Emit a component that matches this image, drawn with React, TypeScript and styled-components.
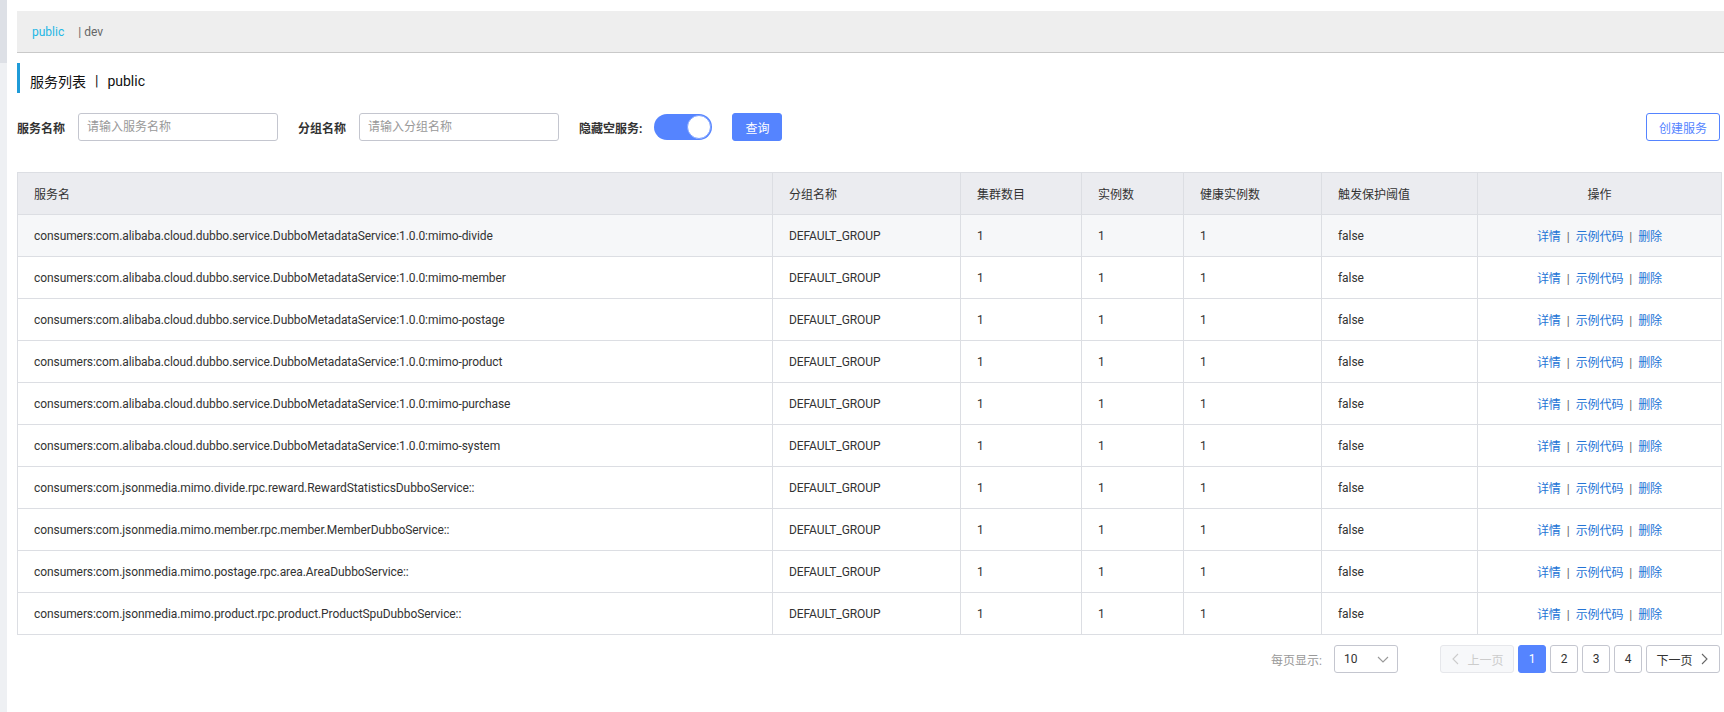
import React from 'react';
import styled, { createGlobalStyle } from 'styled-components';

const GlobalStyle = createGlobalStyle`
	html, body {
		margin: 0;
		padding: 0;
		background: #fff;
	}
	body {
		font-family: Roboto, "Noto Sans CJK SC", sans-serif;
		font-size: 12px;
		color: #333;
	}
`;

const SPage = styled.div`
	display: flex;
	width: 1724px;
	height: 712px;
	overflow: hidden;
`;

const SRail = styled.div`
	width: 7px;
	flex: none;
	background: #eef0f3;
	display: flex;
	flex-direction: column;
`;

const SRailThumb = styled.div`
	height: 63px;
	background: #dde0e6;
`;

const SMain = styled.div`
	flex: 1;
	min-width: 0;
	padding: 11px 4px 0 10px;
	display: flex;
	flex-direction: column;
`;

const STabBar = styled.div`
	height: 41px;
	margin-right: -4px;
	background: #eeeeee;
	border-bottom: 1px solid #c9c9c9;
	display: flex;
	align-items: center;
	padding-left: 15px;
	gap: 14px;
`;

const STab = styled.span<{ $active?: boolean }>`
	font-size: 12px;
	padding-top: 1px;
	color: ${({ $active }) => ($active ? '#23b7e5' : '#666')};
`;

const STitle = styled.div`
	box-sizing: border-box;
	margin-top: 10px;
	height: 30px;
	border-left: 3px solid #1f9bd8;
	padding: 5px 0 0 10px;
	display: flex;
	align-items: center;
	font-size: 14px;
	color: #111;
	gap: 9px;
`;

const SForm = styled.div`
	margin-top: 20px;
	display: flex;
	align-items: center;
	height: 28px;
`;

const SField = styled.div`
	display: flex;
	align-items: center;
	margin-right: 20px;
`;

const SLabel = styled.span`
	font-size: 12px;
	font-weight: 700;
	color: #333;
	margin-right: 13px;
`;

const SInput = styled.input`
	box-sizing: border-box;
	width: 200px;
	height: 28px;
	border: 1px solid #c4c6cf;
	border-radius: 3px;
	padding: 0 8px;
	font-family: inherit;
	font-size: 12px;
	color: #333;
	outline: none;
	&::placeholder {
		color: #999;
	}
`;

const SSwitch = styled.div<{ $on: boolean }>`
	box-sizing: border-box;
	width: 58px;
	height: 26px;
	border-radius: 13px;
	background: ${({ $on }) => ($on ? '#5584ff' : '#e6e7eb')};
	display: flex;
	align-items: center;
	justify-content: ${({ $on }) => ($on ? 'flex-end' : 'flex-start')};
	padding: 1px;
	margin-left: -1px;
`;

const SKnob = styled.div`
	box-sizing: border-box;
	width: 24px;
	height: 24px;
	border-radius: 50%;
	background: #fff;
	border: 1px solid #7ea2ff;
`;

const SButton = styled.button<{ $primary?: boolean }>`
	box-sizing: border-box;
	height: 28px;
	padding: 0 12px;
	border-radius: 3px;
	font-family: inherit;
	font-size: 12px;
	cursor: pointer;
	border: 1px solid #5584ff;
	background: ${({ $primary }) => ($primary ? '#5584ff' : '#fff')};
	color: ${({ $primary }) => ($primary ? '#fff' : '#5584ff')};
`;

const SSpacer = styled.div`
	flex: 1;
`;

const STable = styled.table`
	margin-top: 31px;
	width: 1704px;
	border-collapse: collapse;
	table-layout: fixed;
	font-size: 12px;
`;

const STh = styled.th<{ $center?: boolean }>`
	height: 41px;
	padding: 0 16px;
	background: #ebecf0;
	border: 1px solid #dcdee3;
	font-weight: 400;
	color: #333;
	text-align: ${({ $center }) => ($center ? 'center' : 'left')};
`;

const STr = styled.tr<{ $hover?: boolean }>`
	background: ${({ $hover }) => ($hover ? '#f6f7f9' : '#fff')};
`;

const STd = styled.td<{ $center?: boolean }>`
	height: 41px;
	padding: 0 16px;
	border: 1px solid #dcdee3;
	color: #333;
	white-space: nowrap;
	overflow: hidden;
	letter-spacing: -0.08px;
	text-align: ${({ $center }) => ($center ? 'center' : 'left')};
`;

const SLink = styled.a`
	color: #2474d6;
	text-decoration: none;
	cursor: pointer;
`;

const SSep = styled.span`
	color: #666;
	margin: 0 6px;
`;

const SPager = styled.div`
	margin-top: 10px;
	display: flex;
	justify-content: flex-end;
	align-items: center;
	height: 28px;
`;

const SPagerLabel = styled.span`
	color: #999;
	margin-right: 12px;
`;

const SSelect = styled.div`
	box-sizing: border-box;
	width: 64px;
	height: 28px;
	border: 1px solid #c4c6cf;
	border-radius: 3px;
	display: flex;
	align-items: center;
	justify-content: space-between;
	padding: 0 8px 0 9px;
	margin-right: 38px;
	color: #333;
`;

const SPageBtn = styled.div<{ $active?: boolean; $disabled?: boolean; $wide?: boolean }>`
	box-sizing: border-box;
	height: 28px;
	min-width: 28px;
	width: ${({ $wide }) => ($wide ? '74px' : '28px')};
	margin-left: 4px;
	border-radius: 3px;
	display: flex;
	align-items: center;
	justify-content: center;
	gap: 5px;
	border: 1px solid ${({ $active, $disabled }) => ($active ? '#5584ff' : $disabled ? '#e6e7eb' : '#c4c6cf')};
	background: ${({ $active, $disabled }) => ($active ? '#5584ff' : $disabled ? '#f7f8fa' : '#fff')};
	color: ${({ $active, $disabled }) => ($active ? '#fff' : $disabled ? '#ccc' : '#333')};
	cursor: ${({ $disabled }) => ($disabled ? 'not-allowed' : 'pointer')};
`;

const Chevron = ({ dir, color }: { dir: 'left' | 'right' | 'down'; color: string }) => {
	const d = dir === 'left' ? 'M8 1 L3 6 L8 11' : dir === 'right' ? 'M4 1 L9 6 L4 11' : 'M1 4 L6 9 L11 4';
	return (
		<svg width="12" height="12" viewBox="0 0 12 12" fill="none">
			<path d={d} stroke={color} strokeWidth="1.1" />
		</svg>
	);
};

const services = [
	'consumers:com.alibaba.cloud.dubbo.service.DubboMetadataService:1.0.0:mimo-divide',
	'consumers:com.alibaba.cloud.dubbo.service.DubboMetadataService:1.0.0:mimo-member',
	'consumers:com.alibaba.cloud.dubbo.service.DubboMetadataService:1.0.0:mimo-postage',
	'consumers:com.alibaba.cloud.dubbo.service.DubboMetadataService:1.0.0:mimo-product',
	'consumers:com.alibaba.cloud.dubbo.service.DubboMetadataService:1.0.0:mimo-purchase',
	'consumers:com.alibaba.cloud.dubbo.service.DubboMetadataService:1.0.0:mimo-system',
	'consumers:com.jsonmedia.mimo.divide.rpc.reward.RewardStatisticsDubboService::',
	'consumers:com.jsonmedia.mimo.member.rpc.member.MemberDubboService::',
	'consumers:com.jsonmedia.mimo.postage.rpc.area.AreaDubboService::',
	'consumers:com.jsonmedia.mimo.product.rpc.product.ProductSpuDubboService::',
];

const columns = [
	{ title: '服务名', width: 755 },
	{ title: '分组名称', width: 188 },
	{ title: '集群数目', width: 121 },
	{ title: '实例数', width: 102 },
	{ title: '健康实例数', width: 138 },
	{ title: '触发保护阈值', width: 156 },
	{ title: '操作', width: 244, center: true },
];

export default function App() {
	return (
		<>
			<GlobalStyle />
			<SPage>
				<SRail>
					<SRailThumb />
				</SRail>
				<SMain>
					<STabBar>
						<STab $active>public</STab>
						<STab>| dev</STab>
					</STabBar>
					<STitle>
						<span>服务列表</span>
						<span>|</span>
						<span>public</span>
					</STitle>
					<SForm>
						<SField>
							<SLabel>服务名称</SLabel>
							<SInput placeholder="请输入服务名称" />
						</SField>
						<SField>
							<SLabel>分组名称</SLabel>
							<SInput placeholder="请输入分组名称" />
						</SField>
						<SField>
							<SLabel>隐藏空服务:</SLabel>
							<SSwitch $on>
								<SKnob />
							</SSwitch>
						</SField>
						<SButton $primary>查询</SButton>
						<SSpacer />
						<SButton>创建服务</SButton>
					</SForm>
					<STable>
						<colgroup>
							{columns.map((c) => (
								<col key={c.title} style={{ width: c.width }} />
							))}
						</colgroup>
						<thead>
							<tr>
								{columns.map((c) => (
									<STh key={c.title} $center={c.center}>
										{c.title}
									</STh>
								))}
							</tr>
						</thead>
						<tbody>
							{services.map((name, i) => (
								<STr key={name} $hover={i === 0}>
									<STd>{name}</STd>
									<STd>DEFAULT_GROUP</STd>
									<STd>1</STd>
									<STd>1</STd>
									<STd>1</STd>
									<STd>false</STd>
									<STd $center>
										<SLink>详情</SLink>
										<SSep>|</SSep>
										<SLink>示例代码</SLink>
										<SSep>|</SSep>
										<SLink>删除</SLink>
									</STd>
								</STr>
							))}
						</tbody>
					</STable>
					<SPager>
						<SPagerLabel>每页显示:</SPagerLabel>
						<SSelect>
							<span>10</span>
							<Chevron dir="down" color="#999" />
						</SSelect>
						<SPageBtn $disabled $wide>
							<Chevron dir="left" color="#ccc" />
							上一页
						</SPageBtn>
						<SPageBtn $active>1</SPageBtn>
						<SPageBtn>2</SPageBtn>
						<SPageBtn>3</SPageBtn>
						<SPageBtn>4</SPageBtn>
						<SPageBtn $wide>
							下一页
							<Chevron dir="right" color="#666" />
						</SPageBtn>
					</SPager>
				</SMain>
			</SPage>
		</>
	);
}
